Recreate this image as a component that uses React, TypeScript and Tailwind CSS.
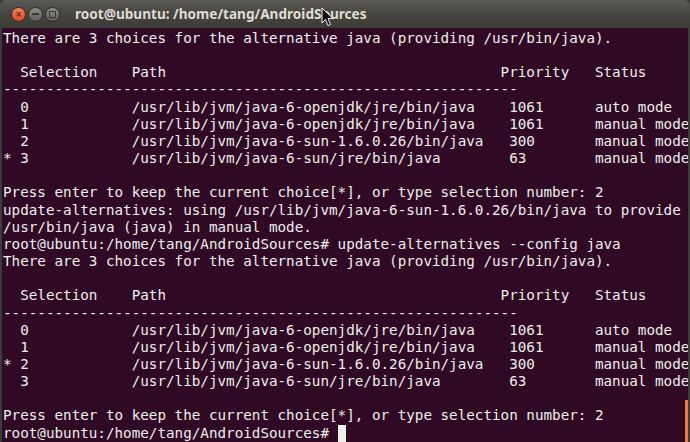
import React from 'react';

const paths = [
  '/usr/lib/jvm/java-6-openjdk/jre/bin/java',
  '/usr/lib/jvm/java-6-openjdk/jre/bin/java',
  '/usr/lib/jvm/java-6-sun-1.6.0.26/bin/java',
  '/usr/lib/jvm/java-6-sun/jre/bin/java',
];
const prios = ['1061', '1061', '300', '63'];
const stats = ['auto mode', 'manual mode', 'manual mode', 'manual mode'];

const header = '  Selection    ' + 'Path'.padEnd(43) + 'Priority   Status';
const dashes = '-'.repeat(60);

const table = (star: number) => [
  header,
  dashes,
  ...paths.map(
    (p, i) =>
      (i === star ? '* ' : '  ') + String(i).padEnd(13) + p.padEnd(44) + prios[i].padEnd(10) + stats[i]
  ),
];

const choices = 'There are 3 choices for the alternative java (providing /usr/bin/java).';
const prompt = 'root@ubuntu:/home/tang/AndroidSources#';
const press = 'Press enter to keep the current choice[*], or type selection number: 2';

const lines = [
  choices,
  '',
  ...table(3),
  '',
  press,
  'update-alternatives: using /usr/lib/jvm/java-6-sun-1.6.0.26/bin/java to provide ',
  '/usr/bin/java (java) in manual mode.',
  prompt + ' update-alternatives --config java',
  choices,
  '',
  ...table(2),
  '',
  press,
];

const Pointer = () => (
  <svg width="14" height="20" viewBox="0 0 14 20" className="absolute left-[321px] top-[7px]">
    <path d="M1 1 L1 16 L4.5 12.5 L7 18.5 L9.5 17.5 L7 11.5 L12 11.5 Z" fill="#111" stroke="#eee" strokeWidth="1" />
  </svg>
);

export default function App() {
  return (
    <div className="w-[690px] h-[442px] bg-[#3c3b37] overflow-hidden flex flex-col">
      <div className="relative h-[28px] shrink-0 rounded-t-[6px] bg-gradient-to-b from-[#5a5954] via-[#46453f] to-[#3c3b37] flex items-center">
        <div className="flex items-center gap-[2px] pl-[11px]">
          <div className="w-[15px] h-[15px] rounded-full bg-gradient-to-b from-[#f7835f] to-[#d9491c] border border-[#3a2a22] flex items-center justify-center text-[9px] leading-none text-[#6b2a12] font-bold font-['DejaVu_Sans',sans-serif]">
            ×
          </div>
          <div className="w-[15px] h-[15px] rounded-full bg-gradient-to-b from-[#8f8d87] to-[#5d5c57] border border-[#2e2d2a] flex items-center justify-center">
            <div className="w-[7px] h-[2px] bg-[#3a3935]" />
          </div>
          <div className="w-[15px] h-[15px] rounded-full bg-gradient-to-b from-[#8f8d87] to-[#5d5c57] border border-[#2e2d2a] flex items-center justify-center">
            <div className="w-[7px] h-[7px] border-[1.5px] border-[#3a3935]" />
          </div>
        </div>
        <div className="pl-[15px] text-[13.6px] font-bold text-[#dfdbd2] font-['Noto_Sans',sans-serif] leading-none pb-[1px]">
          root@ubuntu: /home/tang/AndroidSources
        </div>
        <Pointer />
      </div>
      <div className="relative flex-1 mx-[2px] bg-[#300a24] overflow-hidden pt-[2px] pl-[1px]">
        <div className="font-['DejaVu_Sans_Mono',monospace] text-[14.25px] leading-[17.17px] text-[#eeeeec] whitespace-pre">
          {lines.map((l, i) => (
            <div key={i} className="h-[17.17px]">
              {l}
            </div>
          ))}
          <div className="h-[17.17px] flex">
            <span>{prompt} </span>
            <span className="inline-block w-[8.5px] h-[17px] bg-[#eeeeec]" />
          </div>
        </div>
        <div className="absolute right-0 top-[372px] w-[3px] h-[44px] bg-[#f07746]" />
      </div>
    </div>
  );
}
